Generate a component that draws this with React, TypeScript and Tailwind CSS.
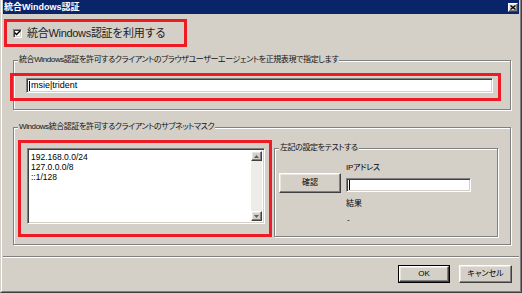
import { ReactNode } from "react";

const raised =
  "border border-t-white border-l-white border-r-[#404040] border-b-[#404040] shadow-[inset_-1px_-1px_0_#808080,inset_1px_1px_0_#e8e6e2] bg-[#d4d0c8]";
const sunken =
  "border border-t-[#808080] border-l-[#808080] border-r-white border-b-white shadow-[inset_1px_1px_0_#404040,inset_-1px_-1px_0_#d4d0c8] bg-white";
const group =
  "relative border border-[#808080] shadow-[1px_1px_0_white,inset_1px_1px_0_white]";

const Legend = ({ children }: { children: ReactNode }) => (
  <span className="absolute left-[4px] -top-[6px] px-[1px] bg-[#d4d0c8] text-[8px] leading-[10px] tracking-[-0.4px] whitespace-nowrap text-[#111] [font-feature-settings:'palt']">
    {children}
  </span>
);

const Arrow = ({ up }: { up?: boolean }) => (
  <div className={`h-[10px] flex items-center justify-center ${raised}`}>
    <svg width="5" height="3" viewBox="0 0 5 3">
      {up ? (
        <polygon points="2.5,0 5,3 0,3" fill="#606060" />
      ) : (
        <polygon points="0,0 5,0 2.5,3" fill="#606060" />
      )}
    </svg>
  </div>
);

export default function App() {
  return (
    <div className="w-[522px] h-[293px] bg-[#d4d0c8] border-l border-l-[#d4d0c8] border-r border-r-[#404040] border-b border-b-[#404040] font-['Liberation_Sans','Noto_Sans_CJK_JP',sans-serif] text-black overflow-hidden">
      <div className="h-full border-l border-l-white border-r border-r-[#808080] border-b border-b-[#808080] px-[1px] flex flex-col">
        {/* title bar */}
        <div className="h-[14px] shrink-0 bg-[#0a246a] flex items-center justify-between pl-[1px] pr-[1px]">
          <span className="text-white font-bold text-[9px] leading-[14px] [font-feature-settings:'palt']">
            統合Windows認証
          </span>
          <div className={`w-[10px] h-[9px] flex items-center justify-center ${raised}`}>
            <svg width="6" height="5" viewBox="0 0 6 5">
              <path d="M0.5 0.5 L5.5 4.5 M5.5 0.5 L0.5 4.5" stroke="black" strokeWidth="1.3" />
            </svg>
          </div>
        </div>

        {/* enable checkbox */}
        <div className="ml-[1px] mt-[5px] w-[183px] h-[28px] shrink-0 border-[3px] border-[#ed1c24] flex items-center pl-[6px] gap-[5px]">
          <div className={`w-[9px] h-[9px] flex items-center justify-center ${sunken}`}>
            <svg width="7" height="6" viewBox="0 0 7 6">
              <path d="M0.8 2.8 L2.6 4.6 L6.2 0.8" stroke="black" strokeWidth="1.4" fill="none" />
            </svg>
          </div>
          <span className="text-[11px] leading-[14px] tracking-[-0.3px] whitespace-nowrap text-[#222]">
            統合Windows認証を利用する
          </span>
        </div>

        {/* user agent group */}
        <div className={`ml-[10px] mt-[13px] w-[498px] h-[50px] shrink-0 ${group}`}>
          <Legend>統合Windows認証を許可するクライアントのブラウザユーザーエージェントを正規表現で指定します</Legend>
          <div className="ml-[-4px] mt-[12px] w-[491px] h-[28px] border-[3px] border-[#ed1c24] pl-[13px] pt-[2px]">
            <div className={`w-[467px] h-[15px] flex items-center pl-[2px] ${sunken}`}>
              <span className="w-[1px] h-[10px] bg-black" />
              <span className="ml-[1px] text-[9px] leading-[11px]">msie|trident</span>
            </div>
          </div>
        </div>

        {/* subnet group */}
        <div className={`ml-[10px] mt-[17px] w-[498px] h-[118px] shrink-0 ${group}`}>
          <Legend>Windows統合認証を許可するクライアントのサブネットマスク</Legend>
          <div className="flex items-start">
            <div className="ml-[4px] mt-[12px] w-[254px] h-[97px] border-[3px] border-[#ed1c24] pl-[6px] pt-[5px]">
              <div className={`w-[238px] h-[76px] flex ${sunken}`}>
                <div className="flex-1 pl-[3px] pt-[3px] text-[8.5px] leading-[10px]">
                  <div>192.168.0.0/24</div>
                  <div>127.0.0.0/8</div>
                  <div>::1/128</div>
                </div>
                <div className="w-[11px] my-[2px] mr-[2px] flex flex-col bg-[#eeece8]">
                  <Arrow up />
                  <div className="flex-1" />
                  <Arrow />
                </div>
              </div>
            </div>

            <div className={`ml-[2px] mt-[20px] w-[224px] h-[89px] ${group}`}>
              <Legend>左記の設定をテストする</Legend>
              <div className="flex items-start">
                <button
                  className={`ml-[4px] mt-[24px] w-[62px] h-[20px] text-[8px] leading-[10px] flex items-center justify-center ${raised}`}
                >
                  確認
                </button>
                <div className="ml-[5px] mt-[14px] flex flex-col">
                  <span className="text-[8px] leading-[10px] tracking-[-0.3px] [font-feature-settings:'palt']">IPアドレス</span>
                  <div className={`mt-[5px] w-[125px] h-[14px] flex items-center pl-[2px] ${sunken}`}>
                    <span className="w-[1px] h-[10px] bg-black" />
                  </div>
                  <span className="mt-[7px] text-[8px] leading-[10px]">結果</span>
                  <span className="mt-[6px] pl-[1px] text-[8px] leading-[10px]">-</span>
                </div>
              </div>
            </div>
          </div>
        </div>

        {/* separator */}
        <div className="mt-[11px] h-[2px] shrink-0 border-t border-t-[#808080] border-b border-b-white" />

        {/* footer buttons */}
        <div className="mt-[7px] flex justify-end gap-[9px] pr-[7px]">
          <div className="w-[52px] h-[18px] border border-black">
            <button className={`w-full h-full text-[8px] leading-[10px] flex items-center justify-center ${raised}`}>
              OK
            </button>
          </div>
          <button
            className={`w-[53px] h-[18px] text-[8px] leading-[10px] flex items-center justify-center [font-feature-settings:'palt'] ${raised}`}
          >
            キャンセル
          </button>
        </div>
      </div>
    </div>
  );
}
